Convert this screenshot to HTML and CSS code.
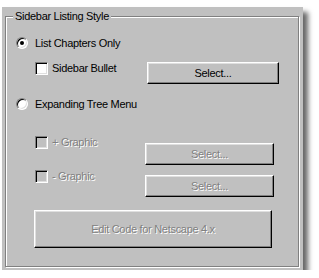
FILE: index.html
```html
<!DOCTYPE html>
<html lang="en">
<head>
    <meta charset="UTF-8">
    <title>Sidebar Listing Style</title>
    <link rel="stylesheet" href="styles.css">
</head>
<body>

<div class="panel">
    <div class="group">
        <div class="group-title">Sidebar Listing Style</div>

        <div class="row row-chapters">
            <span class="radio checked"></span>
            <span class="label">List Chapters Only</span>
        </div>

        <div class="row row-bullet">
            <span class="check"></span>
            <span class="label">Sidebar Bullet</span>
            <button type="button" class="button button-select">Select...</button>
        </div>

        <div class="row row-tree">
            <span class="radio"></span>
            <span class="label">Expanding Tree Menu</span>
        </div>

        <div class="row row-plus">
            <span class="check disabled"></span>
            <span class="label disabled">+ Graphic</span>
            <button type="button" class="button button-small disabled">Select...</button>
        </div>

        <div class="row row-minus">
            <span class="check disabled"></span>
            <span class="label disabled">- Graphic</span>
            <button type="button" class="button button-small disabled">Select...</button>
        </div>

        <div class="row row-edit">
            <button type="button" class="button button-edit disabled">Edit Code for Netscape 4.x</button>
        </div>
    </div>
</div>

</body>
</html>
```

FILE: styles.css
```css
body {
    margin: 0;
    background-color: #ffffff;
    font-family: 'Liberation Sans', Arial, sans-serif;
    font-size: 11px;
    letter-spacing: -0.3px;
    color: #000000;
}
.panel {
    width: 295px;
    height: 254px;
    margin: 7px 0 0 2px;
    padding: 9px 3px 0 3px;
    background-color: #c0c0c0;
    box-shadow: 5px 5px 5px rgba(0, 0, 0, 0.6);
}
.group {
    height: 249px;
    width: 292px;
    border: 1px solid #808080;
    box-shadow: 1px 1px 0 #ffffff, inset 1px 1px 0 #ffffff;
}
.group-title {
    display: table;
    margin: -8px 0 0 7px;
    padding: 0 2px;
    line-height: 14px;
    background-color: #c0c0c0;
}
.row {
    display: flex;
    align-items: flex-start;
}
.label {
    line-height: 16px;
    white-space: nowrap;
}
.label.disabled,
.button.disabled {
    color: #808080;
    text-shadow: 1px 1px 0 #ffffff;
}

/* radio buttons */
.radio {
    box-sizing: border-box;
    width: 12px;
    height: 12px;
    margin: 2px 7px 0 10px;
    border-radius: 50%;
    border: 1px solid;
    border-color: #808080 #ffffff #ffffff #808080;
    box-shadow: inset 1px 1px 0 #000000, inset -1px -1px 0 #dfdfdf;
    background-color: #ffffff;
    position: relative;
}
.radio.checked::after {
    content: '';
    position: absolute;
    left: 3px;
    top: 3px;
    width: 4px;
    height: 4px;
    border-radius: 50%;
    background-color: #000000;
}

/* check boxes */
.check {
    box-sizing: border-box;
    width: 13px;
    height: 13px;
    margin: 2px 4px 0 29px;
    border: 1px solid;
    border-color: #808080 #ffffff #ffffff #808080;
    box-shadow: inset 1px 1px 0 #000000, inset -1px -1px 0 #dfdfdf;
    background-color: #ffffff;
}
.check.disabled {
    background-color: #c0c0c0;
}

/* push buttons */
.button {
    box-sizing: border-box;
    height: 22px;
    padding: 0;
    border: 1px solid;
    border-color: #ffffff #000000 #000000 #ffffff;
    box-shadow: inset -1px -1px 0 #808080, inset 1px 1px 0 #dfdfdf;
    background-color: #c0c0c0;
    font-family: inherit;
    font-size: 11px;
    letter-spacing: -0.3px;
    color: #000000;
}
.button-select {
    width: 132px;
    margin: 2px 19px 0 auto;
}
.button-small {
    width: 129px;
    margin: 9px 24px 0 auto;
}
.button-edit {
    width: 238px;
    height: 38px;
    margin-left: 28px;
}

.row-chapters { margin-top: 12px; }
.row-bullet { margin-top: 9px; }
.row-tree { margin-top: 12px; }
.row-plus { margin-top: 22px; }
.row-minus { margin-top: 3px; }
.row-minus .button-small { margin-top: 7px; }
.row-edit { margin-top: 13px; }
```
